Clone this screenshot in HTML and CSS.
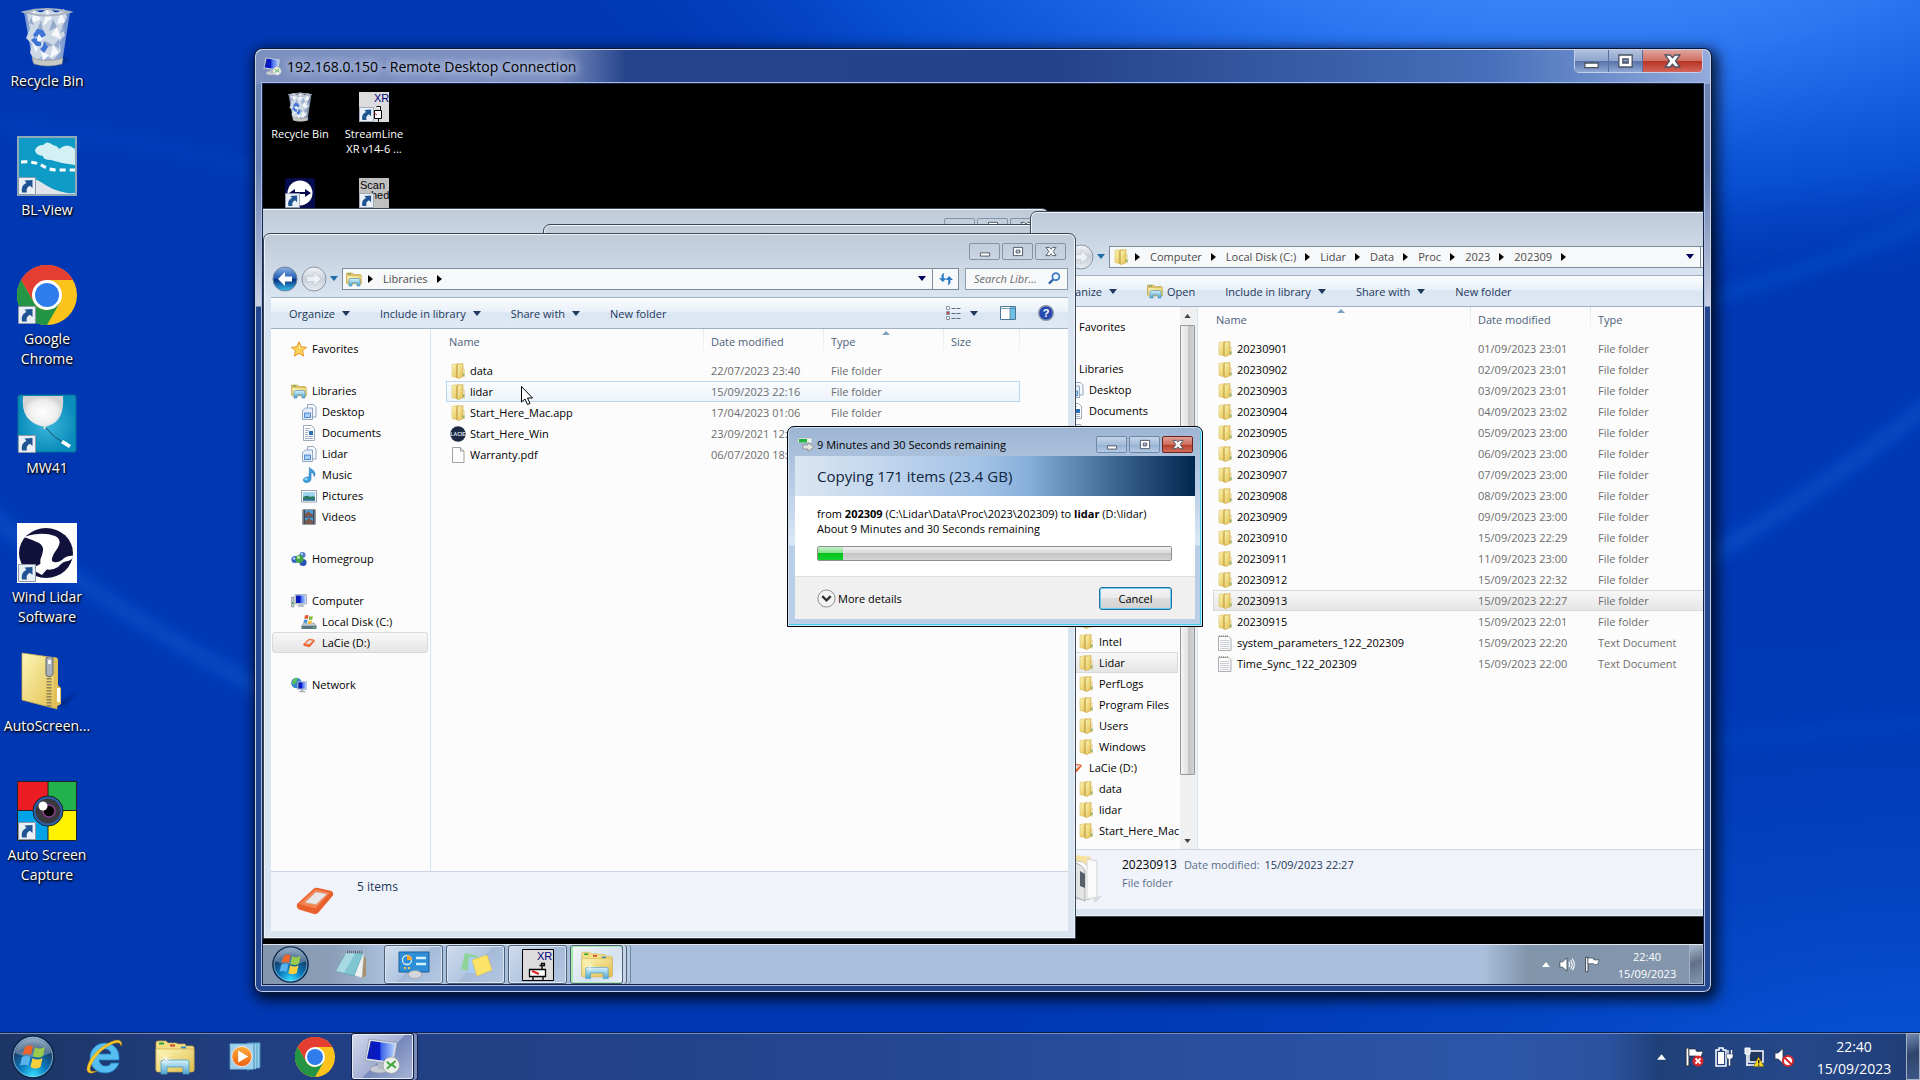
FILE: index.html
```html
<!DOCTYPE html>
<html lang="en">
<head>
    <meta charset="UTF-8">
    <meta name="viewport" content="width=device-width, initial-scale=1.0">
    <title>Desktop</title>
    <link rel="stylesheet" href="styles.css">
</head>
<body>
    <!-- Shared icon shapes -->
    <svg class="sprite" aria-hidden="true">
        <defs>
            <linearGradient id="gFolder" x1="0" x2="1" y1="0" y2="1"><stop offset="0" stop-color="#fdf6b8"/><stop offset="1" stop-color="#e0bd4c"/></linearGradient>
            <linearGradient id="gBlue" x1="0" x2="0" y1="0" y2="1"><stop offset="0" stop-color="#d6f1fb"/><stop offset="1" stop-color="#4fa5d0"/></linearGradient>
            <linearGradient id="gScreen" x1="0" x2="1"><stop offset="0" stop-color="#0a1bb0"/><stop offset=".45" stop-color="#0618c8"/><stop offset=".5" stop-color="#3b62ea"/><stop offset="1" stop-color="#b9d4ff"/></linearGradient>
            <linearGradient id="gNav" x1="0" x2="0" y1="0" y2="1"><stop offset="0" stop-color="#8fb6e6"/><stop offset=".48" stop-color="#1f58b0"/><stop offset=".52" stop-color="#0a2f80"/><stop offset="1" stop-color="#35c1f0"/></linearGradient>
            <linearGradient id="gNavOff" x1="0" x2="0" y1="0" y2="1"><stop offset="0" stop-color="#f3f5f8"/><stop offset=".5" stop-color="#c9d0da"/><stop offset="1" stop-color="#e9eef4"/></linearGradient>
            <radialGradient id="gOrb" cx=".5" cy=".95" r=".95"><stop offset="0" stop-color="#35e0ff"/><stop offset=".35" stop-color="#0b7cc0"/><stop offset=".7" stop-color="#15406c"/><stop offset="1" stop-color="#8ba6c2"/></radialGradient>
            <radialGradient id="gBall"><stop offset="0" stop-color="#fff"/><stop offset=".7" stop-color="#eee"/><stop offset="1" stop-color="#d2d2d2"/></radialGradient>
            <radialGradient id="gTeal"><stop offset="0" stop-color="#3fb7dc"/><stop offset="1" stop-color="#0a8dbb"/></radialGradient>
            <linearGradient id="gBin" x1="0" x2="1"><stop offset="0" stop-color="#9db4d8"/><stop offset=".3" stop-color="#e3ebf5"/><stop offset=".7" stop-color="#c9d6e8"/><stop offset="1" stop-color="#8ea7d0"/></linearGradient>
            <linearGradient id="gOrange" x1="0" x2="0" y1="0" y2="1"><stop offset="0" stop-color="#ffae3c"/><stop offset="1" stop-color="#ea5f10"/></linearGradient>
            <filter id="fBlur" x="-50%" y="-50%" width="200%" height="200%"><feGaussianBlur stdDeviation="1.500"/></filter>
        </defs>

        <symbol id="folder" viewBox="0 0 16 16">
            <path d="M2 1.500l7-1v14.500l-7-1.500z" fill="url(#gFolder)" stroke="#d8bf62" stroke-width=".6"/>
            <path d="M7 1.500l6-1v13l-5 2.200-1-1z" fill="url(#gFolder)" stroke="#c9a540" stroke-width=".6"/>
            <path d="M7 2v13" stroke="#b8953a" stroke-width=".8"/>
            <path d="M13 6h1.300v8H13z" fill="#fff8d8" stroke="#c9a540" stroke-width=".4"/>
            <path d="M13.300 10.500h1v2.500h-1z" fill="#4f9f62"/>
        </symbol>
        <symbol id="library" viewBox="0 0 16 16">
            <path d="M.5 2h6l1 1.500h7V12H.5z" fill="#e7c869" stroke="#b89c4c" stroke-width=".6"/>
            <path d="M1 4.500h14.500V13H1z" fill="url(#gFolder)" stroke="#c4a74c" stroke-width=".5"/>
            <path d="M2 3h3" stroke="#4c9f4c"/>
            <path d="M3 15V9q0-1.500 1.500-1.500h8Q14 7.500 14 9v6h-3v-3H6v3z" fill="url(#gBlue)" stroke="#3c8ab8" stroke-width=".6"/>
        </symbol>
        <symbol id="libfolder" viewBox="0 0 16 16">
            <path d="M6.500.5h6l2.500 2.500v10H6.500z" fill="#f4f8fc" stroke="#7b93b0" stroke-width=".8"/>
            <path d="M1.500 6.500l3-2.500h7v11.500h-10z" fill="#e6eff9" stroke="#7b93b0" stroke-width=".8"/>
            <path d="M3.500 9h6v4.500h-6z" fill="#a5d0f7" stroke="#3b6fc0" stroke-width=".8"/>
        </symbol>
        <symbol id="document" viewBox="0 0 16 16">
            <path d="M2.500.5h8l3 3v12h-11z" fill="#fff" stroke="#8795a8" stroke-width=".8"/>
            <path d="M4 3.500h5M4 5.500h4M4 7.500h3M4 9.500h3M4 11.500h8M4 13.500h8" stroke="#8aa0bb" stroke-width=".8"/>
            <path d="M8 6h4v4H8z" fill="#2a6eb4"/>
        </symbol>
        <symbol id="music" viewBox="0 0 16 16">
            <path d="M8.500.5c1 2 5 2.500 5.500 6 .2 2-1 3-1 3 .3-2.500-1-3.500-3-4V12c0 2-2 3.500-4.500 3.500S2 14 2.500 12.300 5.500 9.800 8 10z" fill="#3ea2e0" stroke="#1e6fb4" stroke-width=".6"/>
            <ellipse cx="5" cy="12" rx="1.500" ry="1" fill="#a9defa"/>
        </symbol>
        <symbol id="picture" viewBox="0 0 16 16">
            <path d="M.5 2.500h15v11.500H.5z" fill="#fff" stroke="#7d8a9a" stroke-width=".8"/>
            <path d="M2 4h12v8.500H2z" fill="#9ed4f0"/>
            <path d="M2 9q5-2.500 7 0 3-1.500 5 0v3.500H2z" fill="#2e7b62"/>
            <path d="M2 11h12v1.500H2z" fill="#2c6ea8"/>
        </symbol>
        <symbol id="video" viewBox="0 0 16 16">
            <path d="M1.500.5h13v15h-13z" fill="#2b3642"/>
            <path d="M4 1h8v6.500H4zM4 8.500h8V15H4z" fill="#4d9fdc"/>
            <path d="M4 5l3-3 5 4v1.500H4zM4 12l4-3 4 3v3H4z" fill="#7c5a50"/>
            <path d="M2.700 1.500v13M13.300 1.500v13" stroke="#dfe6ee" stroke-width="1" stroke-dasharray="1 1"/>
        </symbol>
        <symbol id="homegroup" viewBox="0 0 16 16">
            <circle cx="4" cy="8.500" r="3.600" fill="#3764c8"/><circle cx="11.500" cy="4" r="3" fill="#4f7ad0"/>
            <circle cx="12" cy="11.500" r="3.600" fill="#2a50b8"/><circle cx="8.500" cy="8" r="4" fill="#43a548"/>
            <circle cx="3" cy="7.500" r="1.200" fill="#bcd2ff"/><circle cx="7.500" cy="6.500" r="1.400" fill="#c2efb4"/><circle cx="11" cy="3" r="1" fill="#c8dcff"/>
        </symbol>
        <symbol id="computer" viewBox="0 0 16 16">
            <path d="M.5 4h2.500v10H.5z" fill="#c5cad0" stroke="#777f88" stroke-width=".6"/><path d="M1 9h1.500v2H1z" fill="#3cb44a"/>
            <path d="M4 1.500h11.500V11H4z" fill="#d5dae2" stroke="#8890a0" stroke-width=".6"/>
            <path d="M5 2.500h9.500V10H5z" fill="url(#gScreen)"/>
            <path d="M8 11h4l1.500 3h-7z" fill="#b9bfc8"/>
        </symbol>
        <symbol id="disk" viewBox="0 0 16 16">
            <path d="M3 9h10l2.500 3H.5z" fill="#bcc7cf" stroke="#7b8890" stroke-width=".5"/><path d="M.5 12h15v3H.5z" fill="#5b7482"/><path d="M12 13h2v1h-2z" fill="#4fe05c"/>
            <path d="M4 1.500q2-1 3.500 0l-.7 3.500q-2-1-3.500 0z" fill="#e8532a"/><path d="M8.300 2q2 1 3.700 0l-.8 3.500q-2 1-3.500 0z" fill="#84b93a"/>
            <path d="M3 6q2-1 3.500 0l-.7 3q-2-1-3.500 0z" fill="#3a8ed8"/><path d="M7.400 6.500q2 1 3.700 0l-.8 3q-2 1-3.500 0z" fill="#f5bd2f"/>
        </symbol>
        <symbol id="lacie" viewBox="0 0 38 28">
            <path d="M1 17L18 1.500q1-1 3-.7l14.500 3.200q2 1 1.500 4.500L22 26q-2 1.500-4 1L3 22.500Q0 20.500 1 17z" fill="#e8602c"/>
            <path d="M3 17L18.500 3q1-.8 2.500-.5L34 5.500 20.500 20.500q-1 1-2.500.7z" fill="#f58352"/>
            <path d="M9 15.500L20 5l11 2-11 10.500z" fill="#e8e6e6" stroke="#d0b4a8" stroke-width=".6"/>
        </symbol>
        <symbol id="network" viewBox="0 0 16 16">
            <circle cx="5.500" cy="6" r="5.300" fill="#2f86cc"/><path d="M2 3q3-3 5-1.500L5 5 3 8 1 6zM6 7l3-1-1 4z" fill="#5dc253"/>
            <path d="M6.500 4.500h9.500v8H6.500z" fill="#ccd3dd" stroke="#8c96a4" stroke-width=".4"/><path d="M7.300 5.300h8v6.300h-8z" fill="url(#gScreen)"/>
            <path d="M10 12.500h2.500V14h2v1.300H8V14h2z" fill="#aab2bd"/>
        </symbol>
        <symbol id="star" viewBox="0 0 16 16">
            <path d="M8 .8l2.200 4.900 5.300.6-4 3.500 1.200 5.300L8 12.400l-4.700 2.700 1.200-5.300-4-3.500 5.300-.6z" fill="#fdd257" stroke="#e08a1e" stroke-width=".9"/>
            <path d="M8 3l1.300 3.600L8 8z" fill="#fff3b8"/>
        </symbol>
        <symbol id="file" viewBox="0 0 16 16">
            <path d="M2.500.5h8l3.500 3.500v11.500H2.500z" fill="#fcfcfc" stroke="#8b8b8b" stroke-width=".8"/><path d="M10.500.5V4H14" fill="#e4e4e4" stroke="#8b8b8b" stroke-width=".8"/>
        </symbol>
        <symbol id="textfile" viewBox="0 0 16 16">
            <path d="M1.500 1.500h10l2.500 2v12H1.500z" fill="#fcfcfc" stroke="#9a9a9a" stroke-width=".8"/>
            <path d="M3 5.500h9.500M3 7.500h9.500M3 9.500h9.500M3 11.500h9.500M3 13.500h9.500" stroke="#b4bcc8" stroke-width=".7"/>
            <path d="M2.500 0v2M4.500 0v2M6.500 0v2M8.500 0v2M10.500 0v2" stroke="#8b8b8b" stroke-width=".8"/>
        </symbol>

        <symbol id="shortcut" viewBox="0 0 18 18">
            <path d="M.5.5h17v17H.5z" fill="#e9eff6" stroke="#8f9aa8"/>
            <path d="M4 15.500C3 10 5.500 7 8.500 6L6.500 3.500 14.500 3v8L12 8.800C9.500 10 8 12 9 15.500z" fill="#1f5391"/>
        </symbol>
        <symbol id="bin" viewBox="0 0 60 60">
            <ellipse cx="40" cy="53" rx="12" ry="4" fill="#001a66" opacity=".4" filter="url(#fBlur)"/>
            <path d="M7 5h46L45 56q-15 4-29 0z" fill="url(#gBin)" opacity=".75"/>
            <path d="M10 7l6-5 8 4 7-5 8 5 8-4 3 8-5 10 3 8-6 7 2 9-8 9-9-6-8 7-6-8 2-9-6-6 4-9z" fill="#cdd8e5"/>
            <path d="M16 3l8 9-9 4zM30 2l5 9-9 8zM44 5l-4 12 8-2zM20 22l8 8-7 6zM40 20l-6 8 10 4zM36 38l6 8-9 5zM24 44l8 4-6 6zM15 34l6 7-2 5z" fill="#f6f9fc"/>
            <path d="M24 13l-4 10 6 2zM36 12l-4 12 8-4zM28 34l8 4-9 4zM42 32l-5 6 5 4zM14 10l3 8-5-2zM46 18l-3 8 5-2z" fill="#95abc9"/>
            <path d="M16 28l4-6 6 1 3 5-4 3-3-4-3 5zM14 33l5 6 5 0 0-4-4-1 0-5zM27 34l4 6-4 6-4-4 3-3z" fill="#3f74d6"/>
            <path d="M7 5q23-6 46 0-23 7-46 0z" fill="none" stroke="#aab4c0" stroke-width="2"/>
            <path d="M15 51q15 5 31 0l-1 6q-14 4-28 0z" fill="#c9c9c4" stroke="#8c8c88" stroke-width=".6"/>
        </symbol>
        <symbol id="chrome" viewBox="0 0 60 60">
            <circle cx="30" cy="30" r="30" fill="#fcc31c"/>
            <path d="M4 15A30 30 0 0 1 56 15H30z" fill="#e33e31"/><path d="M4 15L17 37.500 30 15z" fill="#e33e31"/>
            <path d="M4 15L17 37.500A15 15 0 0 0 30 45l13-7.500L30 60A30 30 0 0 1 4 15z" fill="#249544"/>
            <circle cx="30" cy="30" r="15" fill="#fff"/><circle cx="30" cy="30" r="12" fill="#2f7ded"/>
        </symbol>
        <symbol id="orb" viewBox="0 0 44 44">
            <circle cx="22" cy="22" r="21" fill="url(#gOrb)" stroke="#0d2848" stroke-width="1.500"/>
            <circle cx="22" cy="22" r="19.500" fill="none" stroke="#a9c8e2" stroke-width="1" opacity=".7"/>
            <path d="M4 18A18.500 18.500 0 0 1 40 18Q22 26 4 18z" fill="#fff" opacity=".28"/>
            <path d="M14 12q4-3 8-1l-2 9q-4-2-8.500 0z" fill="#f0642c"/><path d="M24 12q4 3 10 0l-2 9q-5 3-10 0z" fill="#9acb4c"/>
            <path d="M11 22q4-2 8.500 0l-2 9q-4-2.500-8.500 0z" fill="#5ab3ec"/><path d="M21.500 23q5 3 10 0l-2 9q-5 3-10 0z" fill="#fbcf3b"/>
        </symbol>
        <symbol id="ie" viewBox="0 0 40 40">
            <path d="M20 6c8 0 14 6 14 14v3H14c1 4 3 6 7 6 3 0 4-1 5-3h8c-2 6-7 10-14 10C12 36 5 30 5 21S12 6 20 6zm0 6c-4 0-6 2-6.500 5h12.500c-.5-3-2.500-5-6-5z" fill="#56bdf0" stroke="#1f7dc4" stroke-width=".8"/>
            <path d="M36 9c2-5-2-8-10-4C14 10 3 22 2 32c0 5 5 5 10 2-4 1-7 1-7-2C6 24 17 11 27 7c5-2 9-2 9 2z" fill="#f9c928" stroke="#d49a10" stroke-width=".5"/>
        </symbol>
        <symbol id="explorer" viewBox="0 0 40 36">
            <path d="M1 4q0-2 2-2h8l2 2h8l2 1h7l1 2h6q2 0 2 2v22H1z" fill="#f3dd85" stroke="#c9a94a" stroke-width=".7"/>
            <path d="M4 4.500h5" stroke-width="2" stroke="#2fa13c"/><path d="M15 6.500h5" stroke-width="2" stroke="#d0432c"/><path d="M26 8.500h5" stroke-width="2" stroke="#2f88c8"/>
            <path d="M1 10h38v21q0 2-2 2H3q-2 0-2-2z" fill="url(#gFolder)" stroke="#cda94a" stroke-width=".7"/>
            <path d="M6 35V23q0-2 2-2h24q2 0 2 2v12h-6v-7H12v7z" fill="url(#gBlue)" stroke="#4c9cc4" stroke-width=".8"/>
            <path d="M11 14v12M5 20h12M7 16l8 8M15 16l-8 8" stroke="#fff" stroke-width=".8" opacity=".8"/>
        </symbol>
        <symbol id="wmp" viewBox="0 0 36 32">
            <path d="M20 1h14v27l-14 3z" fill="#6fb4d8" stroke="#3a84b0" stroke-width=".6"/><path d="M29 2v28M32 2v27" stroke="#b8e0f2" stroke-width=".8"/>
            <path d="M1 2h26v28H1z" fill="#9fd0ec" stroke="#4a94c0" stroke-width=".6"/>
            <circle cx="14" cy="16" r="11" fill="url(#gOrange)" stroke="#fff" stroke-width=".8"/><path d="M10 9.500l11 6.500-11 6.500z" fill="#fff"/>
        </symbol>
        <symbol id="rdp" viewBox="0 0 38 36">
            <ellipse cx="16" cy="31" rx="10" ry="4" fill="#c8ccd4" stroke="#8a909c" stroke-width=".6"/><path d="M14 24h6v7h-6z" fill="#b4bac6"/>
            <path d="M5 0l29 4-4 22L1 22z" fill="#d9dee8" stroke="#8e98ac" stroke-width=".8"/><path d="M7 2l25 3.500-4 18L3 20z" fill="url(#gScreen)"/>
            <circle cx="28" cy="27" r="8.500" fill="#eceeec" stroke="#9aa09a" stroke-width=".8"/>
            <path d="M23.500 23.500l4 3.500-4 3.500M32.500 22.500l-4 3.500 4 3.500" fill="none" stroke="#3fa53a" stroke-width="2"/>
        </symbol>
        <symbol id="arrow-down" viewBox="0 0 8 5"><path d="M0 0h8L4 5z"/></symbol>
        <symbol id="crumb" viewBox="0 0 5 8"><path d="M0 0l5 4-5 4z"/></symbol>
        <symbol id="flag" viewBox="0 0 20 20">
            <path d="M2 1h3v18H2z" fill="#fff" stroke="#222c3c"/><path d="M5 2h7v2q3 1 7 0-1 5-3 6-3 1-4-1H5z" fill="#fff" stroke="#222c3c" stroke-width=".7"/>
        </symbol>
        <symbol id="speaker" viewBox="0 0 18 18">
            <path d="M1 6h3l5-4.500v15L4 12H1z" fill="#fff" stroke="#2a3444" stroke-width=".8"/>
        </symbol>
        <symbol id="min" viewBox="0 0 14 12"><path d="M2 7.500h10v3.500H2z" fill="#fff" stroke="#4a5464"/></symbol>
        <symbol id="max" viewBox="0 0 14 12"><path d="M2 1.500h10v9H2zM5 4.500h4v3H5z" fill="#fff" fill-rule="evenodd" stroke="#4a5464"/></symbol>
        <symbol id="close" viewBox="0 0 14 12"><path d="M1.500 1.500h3.700L7 3.500l1.800-2h3.700L9.300 6l3.200 4.500H8.800L7 8.500l-1.800 2H1.500L4.700 6z" fill="#fff" stroke="#4a5464"/></symbol>
    </svg>

    <main class="desktop">
        <svg class="wallpaper" viewBox="0 0 1920 1080" preserveAspectRatio="none" aria-hidden="true">
            <defs>
                <radialGradient id="wTop" cx="0" cy="0" r="1" gradientUnits="userSpaceOnUse" gradientTransform="translate(1580 -80) scale(1050 400)"><stop offset="0" stop-color="#4a96ff"/><stop offset=".35" stop-color="#2c76f2"/><stop offset=".7" stop-color="#0a55da" stop-opacity=".8"/><stop offset="1" stop-color="#0038b4" stop-opacity="0"/></radialGradient>
                <radialGradient id="wBottom" cx="1" cy="1.100" r=".55"><stop offset="0" stop-color="#0a5ce0"/><stop offset="1" stop-color="#0038b4" stop-opacity="0"/></radialGradient>
                <filter id="soft"><feGaussianBlur stdDeviation="8"/></filter>
            </defs>
            <path d="M0 0h1920v1080H0z" fill="#0038b4"/>
            <path d="M0 0h1920v1080H0z" fill="url(#wBottom)"/>
            <path d="M0 0h1920v1080H0z" fill="url(#wTop)"/>
            <g fill="none" stroke="#0b58d2" filter="url(#soft)" opacity=".6">
                <path d="M-20 530Q120 650 300 740" stroke-width="16"/>
                <path d="M1680 600Q1800 530 1940 415" stroke-width="16"/>
                <path d="M1680 320Q1800 290 1940 225" stroke-width="10"/>
                <path d="M-20 130Q140 140 280 185M1680 780Q1800 765 1940 755" stroke-width="5"/>
            </g>
        </svg>

        <ul class="icons">
            <li><svg><use href="#bin"/></svg><span>Recycle Bin</span></li>
            <li>
                <svg viewBox="0 0 60 60">
                    <path d="M1 1h58v58H1z" fill="#0e9bc6" stroke="#8fa9b8" stroke-width="2"/>
                    <path d="M18 14q2-5 8-5 4-5 10 0 5 1 6 4 8-7 16 0v16q-12-1-24-5-8 0-8-4-8-1-8-6z" fill="#d3f0f5"/>
                    <path d="M4 26q14-1 22 4 6 4 14 4h18" fill="none" stroke="#fff" stroke-width="3" stroke-dasharray="6 4"/>
                    <path d="M2 43q12-3 20 2t14 8q12 5 22 4v1H2z" fill="#dfe5ea"/>
                    <use href="#shortcut" x="1" y="41" width="18" height="18"/>
                </svg>
                <span>BL-View</span>
            </li>
            <li><svg viewBox="0 0 60 60"><use href="#chrome"/><use href="#shortcut" x="1" y="41" width="18" height="18"/></svg><span>Google Chrome</span></li>
            <li>
                <svg viewBox="0 0 60 60">
                    <rect x="1" y="1" width="58" height="57" rx="2" fill="url(#gTeal)" stroke="#0a6f94"/>
                    <path d="M6 2h40q2 25-15 30l-3 1 2 2h-4l1-2Q3 28 6 2z" fill="url(#gBall)"/>
                    <path d="M29 34q8 10 18 15" fill="none" stroke="#17506a"/><path d="M46 46l8 5-2 3-8-5z" fill="#fff"/>
                    <use href="#shortcut" x="1" y="41" width="18" height="18"/>
                </svg>
                <span>MW41</span>
            </li>
            <li>
                <svg viewBox="0 0 60 60">
                    <path d="M0 0h60v60H0z" fill="#fff"/>
                    <ellipse cx="29" cy="30" rx="27" ry="25" fill="#11113b"/>
                    <path d="M7 14q18-6 31-1 8 4 2 13-6 8-5 12 4 3 10-1 5-5 12-4-2 4-6 5-5 0-10 6-8 5-15 1-5-5-1-13 3-9-3-12-6-3-15-6z" fill="#fff"/>
                    <path d="M12 45q11-1 15-9l4 9-6 7z" fill="#fff"/>
                    <use href="#shortcut" x="1" y="41" width="18" height="18"/>
                </svg>
                <span>Wind Lidar Software</span>
            </li>
            <li>
                <svg viewBox="0 0 60 60">
                    <path d="M36 54l24-14-12 14z" fill="#001a60" opacity=".5" filter="url(#fBlur)"/>
                    <path d="M5 1l35 5v51L5 48z" fill="url(#gFolder)" stroke="#cda84a" stroke-width=".7"/>
                    <path d="M37 5l4 2v26l3 3v16l-7 4z" fill="#dfbf58"/><path d="M40 36h3v14h-3z" fill="#fff"/>
                    <path d="M32 8v48" stroke="#8d8358" stroke-width="5" stroke-dasharray="1.500 1.500"/>
                    <path d="M29 6q4-3 7 0v16q-3 5-7 1z" fill="#a9b0b8" stroke="#5c6570"/><path d="M31 8h3v4h-3z" fill="#f3f6f8"/>
                </svg>
                <span>AutoScreen...</span>
            </li>
            <li>
                <svg viewBox="0 0 60 60">
                    <path d="M0 0h31v30H0z" fill="#ed1c24"/><path d="M31 0h29v30H31z" fill="#22b14c"/><path d="M0 30h31v30H0z" fill="#00a2e8"/><path d="M31 30h29v30H31z" fill="#fff200"/>
                    <path d="M31 0v60M0 29.500h60M.5.5h59v59H.5z" fill="none" stroke="#222"/>
                    <circle cx="31" cy="30" r="15" fill="#3a3a3e" stroke="#111"/><circle cx="31" cy="30" r="13.500" fill="none" stroke="#2c62ac" stroke-width="2"/>
                    <circle cx="32" cy="30" r="6" fill="#000" stroke="#8b3f8e" stroke-width="1.500"/><circle cx="26" cy="25" r="4.500" fill="#fff"/>
                    <use href="#shortcut" x="1" y="41" width="18" height="18"/>
                </svg>
                <span>Auto Screen Capture</span>
            </li>
        </ul>

        <!-- Remote session -->
        <section class="rdp">
            <header class="rdp-title">
                <svg class="rdp-icon"><use href="#rdp"/></svg>
                <h1>192.168.0.150 - Remote Desktop Connection</h1>
                <div class="rdp-buttons">
                    <button aria-label="Minimize"><svg><use href="#min"/></svg></button>
                    <button aria-label="Maximize"><svg><use href="#max"/></svg></button>
                    <button class="rdp-close" aria-label="Close"><svg><use href="#close"/></svg></button>
                </div>
            </header>

            <div class="remote">
                <div class="remote-desktop">
                    <ul class="remote-icons">
                        <li><svg><use href="#bin"/></svg><span>Recycle Bin</span></li>
                        <li>
                            <svg viewBox="0 0 30 30">
                                <path d="M0 0h30v30H0z" fill="#dcdcdc"/><text x="15" y="10" font-size="11" font-family="Liberation Sans, sans-serif" fill="#00007c">XR</text>
                                <path d="M15.500 18.500h7v8h-7zM17.500 14.500h4v4M19.500 26.500v3.500" fill="#fff" stroke="#000"/><path d="M14 20l4 3" stroke="#c22"/>
                                <use href="#shortcut" x="0" y="15" width="15" height="15"/>
                            </svg>
                            <span>StreamLine<br>XR v14-6 ...</span>
                        </li>
                        <li>
                            <svg viewBox="0 0 30 30">
                                <rect width="30" height="32" rx="3" fill="#050b4c"/><circle cx="15" cy="15" r="12.500" fill="#fff"/>
                                <path d="M4 15l6-4v3h10v-3l6 4-6 4v-3H10v3z" fill="#050b4c"/><use href="#shortcut" x="0" y="15" width="15" height="15"/>
                            </svg>
                        </li>
                        <li>
                            <svg viewBox="0 0 30 30">
                                <path d="M0 0h30v30H0z" fill="#c0c0c0"/>
                                <g font-size="11" font-family="Liberation Sans, sans-serif"><text x="1" y="11">Scan</text><text x="12" y="21">hed</text></g>
                                <use href="#shortcut" x="0" y="15" width="15" height="15"/>
                            </svg>
                        </li>
                    </ul>

                    <div class="window window-back">
                        <div class="window-buttons">
                            <button aria-label="Minimize"><svg><use href="#min"/></svg></button>
                            <button aria-label="Maximize"><svg><use href="#max"/></svg></button>
                            <button aria-label="Close"><svg><use href="#close"/></svg></button>
                        </div>
                    </div>
                    <div class="window window-middle"></div>

                    <!-- C:\Lidar\Data\Proc\2023\202309 -->
                    <section class="window explorer explorer-source">
                        <div class="window-buttons">
                            <button aria-label="Minimize"><svg><use href="#min"/></svg></button>
                            <button aria-label="Maximize"><svg><use href="#max"/></svg></button>
                            <button aria-label="Close"><svg><use href="#close"/></svg></button>
                        </div>
                        <div class="navbar">
                            <svg class="nav-arrows" viewBox="0 0 56 26" aria-hidden="true">
                                <circle cx="13" cy="13" r="12" fill="url(#gNav)" stroke="#69809c"/><path d="M13 6L6 13l7 7v-4.500h7v-5h-7z" fill="#fff"/>
                                <circle cx="42" cy="13" r="12" fill="url(#gNavOff)" stroke="#8a94a3"/><path d="M42 6l7 7-7 7v-4.500h-7v-5h7z" fill="#eef1f5" stroke="#ccd2da"/>
                            </svg>
                            <svg class="tri tri-blue"><use href="#arrow-down"/></svg>
                            <nav class="address">
                                <svg class="ico"><use href="#folder"/></svg><svg class="crumb"><use href="#crumb"/></svg>
                                <a href="#">Computer</a><svg class="crumb"><use href="#crumb"/></svg>
                                <a href="#">Local Disk (C:)</a><svg class="crumb"><use href="#crumb"/></svg>
                                <a href="#">Lidar</a><svg class="crumb"><use href="#crumb"/></svg>
                                <a href="#">Data</a><svg class="crumb"><use href="#crumb"/></svg>
                                <a href="#">Proc</a><svg class="crumb"><use href="#crumb"/></svg>
                                <a href="#">2023</a><svg class="crumb"><use href="#crumb"/></svg>
                                <a href="#">202309</a><svg class="crumb"><use href="#crumb"/></svg>
                                <svg class="tri tri-end"><use href="#arrow-down"/></svg>
                                <button class="refresh" aria-label="Refresh"></button>
                            </nav>
                            <div class="search"></div>
                        </div>
                        <div class="toolbar">
                            <button>Organize<svg class="tri"><use href="#arrow-down"/></svg></button>
                            <button class="open"><svg class="ico"><use href="#library"/></svg>Open</button>
                            <button>Include in library<svg class="tri"><use href="#arrow-down"/></svg></button>
                            <button>Share with<svg class="tri"><use href="#arrow-down"/></svg></button>
                            <button>New folder</button>
                        </div>
                        <div class="panes">
                            <ul class="tree tree-scroll">
                                <li><svg class="ico"><use href="#star"/></svg>Favorites</li>
                                <li class="gap"></li>
                                <li><svg class="ico"><use href="#library"/></svg>Libraries</li>
                                <li class="l2"><svg class="ico"><use href="#libfolder"/></svg>Desktop</li>
                                <li class="l2"><svg class="ico"><use href="#document"/></svg>Documents</li>
                                <li class="l2"><svg class="ico"><use href="#libfolder"/></svg></li>
                                <li class="l2"><svg class="ico"><use href="#music"/></svg></li>
                                <li class="l2"><svg class="ico"><use href="#picture"/></svg></li>
                                <li class="l2"><svg class="ico"><use href="#video"/></svg></li>
                                <li class="gap"></li>
                                <li><svg class="ico"><use href="#homegroup"/></svg></li>
                                <li class="gap"></li>
                                <li><svg class="ico"><use href="#computer"/></svg></li>
                                <li class="l2"><svg class="ico"><use href="#disk"/></svg></li>
                                <li class="l3"><svg class="ico"><use href="#folder"/></svg></li>
                                <li class="l3"><svg class="ico"><use href="#folder"/></svg>Intel</li>
                                <li class="l3 selected"><svg class="ico"><use href="#folder"/></svg>Lidar</li>
                                <li class="l3"><svg class="ico"><use href="#folder"/></svg>PerfLogs</li>
                                <li class="l3"><svg class="ico"><use href="#folder"/></svg>Program Files</li>
                                <li class="l3"><svg class="ico"><use href="#folder"/></svg>Users</li>
                                <li class="l3"><svg class="ico"><use href="#folder"/></svg>Windows</li>
                                <li class="l2"><svg class="ico ico-small"><use href="#lacie"/></svg>LaCie (D:)</li>
                                <li class="l3"><svg class="ico"><use href="#folder"/></svg>data</li>
                                <li class="l3"><svg class="ico"><use href="#folder"/></svg>lidar</li>
                                <li class="l3"><svg class="ico"><use href="#folder"/></svg>Start_Here_Mac</li>
                            </ul>
                            <div class="scrollbar">
                                <svg class="scroll-up"><use href="#arrow-down"/></svg>
                                <div class="thumb"></div>
                                <svg class="scroll-down"><use href="#arrow-down"/></svg>
                            </div>
                            <div class="files">
                                <table>
                                    <thead>
                                        <tr><th class="col-name sorted">Name</th><th class="col-date">Date modified</th><th>Type</th></tr>
                                    </thead>
                                    <tbody>
                                        <tr><td><svg class="ico"><use href="#folder"/></svg>20230901</td><td>01/09/2023 23:01</td><td>File folder</td></tr>
                                        <tr><td><svg class="ico"><use href="#folder"/></svg>20230902</td><td>02/09/2023 23:01</td><td>File folder</td></tr>
                                        <tr><td><svg class="ico"><use href="#folder"/></svg>20230903</td><td>03/09/2023 23:01</td><td>File folder</td></tr>
                                        <tr><td><svg class="ico"><use href="#folder"/></svg>20230904</td><td>04/09/2023 23:02</td><td>File folder</td></tr>
                                        <tr><td><svg class="ico"><use href="#folder"/></svg>20230905</td><td>05/09/2023 23:00</td><td>File folder</td></tr>
                                        <tr><td><svg class="ico"><use href="#folder"/></svg>20230906</td><td>06/09/2023 23:00</td><td>File folder</td></tr>
                                        <tr><td><svg class="ico"><use href="#folder"/></svg>20230907</td><td>07/09/2023 23:00</td><td>File folder</td></tr>
                                        <tr><td><svg class="ico"><use href="#folder"/></svg>20230908</td><td>08/09/2023 23:00</td><td>File folder</td></tr>
                                        <tr><td><svg class="ico"><use href="#folder"/></svg>20230909</td><td>09/09/2023 23:00</td><td>File folder</td></tr>
                                        <tr><td><svg class="ico"><use href="#folder"/></svg>20230910</td><td>15/09/2023 22:29</td><td>File folder</td></tr>
                                        <tr><td><svg class="ico"><use href="#folder"/></svg>20230911</td><td>11/09/2023 23:00</td><td>File folder</td></tr>
                                        <tr><td><svg class="ico"><use href="#folder"/></svg>20230912</td><td>15/09/2023 22:32</td><td>File folder</td></tr>
                                        <tr class="selected"><td><svg class="ico"><use href="#folder"/></svg>20230913</td><td>15/09/2023 22:27</td><td>File folder</td></tr>
                                        <tr><td><svg class="ico"><use href="#folder"/></svg>20230915</td><td>15/09/2023 22:01</td><td>File folder</td></tr>
                                        <tr><td><svg class="ico"><use href="#textfile"/></svg>system_parameters_122_202309</td><td>15/09/2023 22:20</td><td>Text Document</td></tr>
                                        <tr><td><svg class="ico"><use href="#textfile"/></svg>Time_Sync_122_202309</td><td>15/09/2023 22:00</td><td>Text Document</td></tr>
                                    </tbody>
                                </table>
                            </div>
                        </div>
                        <footer class="details">
                            <svg class="details-icon" viewBox="0 0 64 56" aria-hidden="true">
                                <path d="M10 2l32 4v8L10 10z" fill="#f6e29a"/><path d="M44 48l10-4-8 8z" fill="#d8dade"/>
                                <path d="M14 8l20 3 6 6v32L14 46z" fill="#fff" stroke="#c8c8c8"/>
                                <path d="M26 12q8 2 10 8v30l-10-4z" fill="#e2e4e6" stroke="#aaa"/><path d="M31 20l5 3v14l-5-2z" fill="#56606a"/><path d="M38 8l10 2v36l-10 2z" fill="#fafafa" stroke="#d4d4d4"/>
                            </svg>
                            <div>
                                <p><b>20230913</b><span class="dim">Date modified:</span> 15/09/2023 22:27</p>
                                <p class="dim">File folder</p>
                            </div>
                        </footer>
                    </section>

                    <!-- Libraries -->
                    <section class="window explorer explorer-target">
                        <div class="window-buttons">
                            <button aria-label="Minimize"><svg><use href="#min"/></svg></button>
                            <button aria-label="Maximize"><svg><use href="#max"/></svg></button>
                            <button aria-label="Close"><svg><use href="#close"/></svg></button>
                        </div>
                        <div class="navbar">
                            <svg class="nav-arrows" viewBox="0 0 56 26" aria-hidden="true">
                                <circle cx="13" cy="13" r="12" fill="url(#gNav)" stroke="#69809c"/><path d="M13 6L6 13l7 7v-4.500h7v-5h-7z" fill="#fff"/>
                                <circle cx="42" cy="13" r="12" fill="url(#gNavOff)" stroke="#8a94a3"/><path d="M42 6l7 7-7 7v-4.500h-7v-5h7z" fill="#eef1f5" stroke="#ccd2da"/>
                            </svg>
                            <svg class="tri tri-blue"><use href="#arrow-down"/></svg>
                            <nav class="address">
                                <svg class="ico"><use href="#library"/></svg><svg class="crumb"><use href="#crumb"/></svg>
                                <a href="#">Libraries</a><svg class="crumb"><use href="#crumb"/></svg>
                                <svg class="tri tri-end"><use href="#arrow-down"/></svg>
                                <button class="refresh" aria-label="Refresh">
                                    <svg viewBox="0 0 16 16"><path d="M6 1Q2 2 3 7H0l4.500 4.500L8.500 7H5.500Q5 4 6 1zM10 15q4-1 3-6h3l-4.500-4.500L7.500 9h3q.5 3-.5 6z" fill="#2a7bc4"/></svg>
                                </button>
                            </nav>
                            <div class="search">
                                <input type="search" placeholder="Search Libr..." aria-label="Search Libraries">
                                <svg viewBox="0 0 14 14"><circle cx="8.500" cy="5" r="3.800" fill="#e8f4fc" stroke="#3a78c0" stroke-width="1.800"/><path d="M5.500 8L1 12.500" stroke="#2d5fa8" stroke-width="2.400"/></svg>
                            </div>
                        </div>
                        <div class="toolbar">
                            <button>Organize<svg class="tri"><use href="#arrow-down"/></svg></button>
                            <button>Include in library<svg class="tri"><use href="#arrow-down"/></svg></button>
                            <button>Share with<svg class="tri"><use href="#arrow-down"/></svg></button>
                            <button>New folder</button>
                            <div class="toolbar-end">
                                <button aria-label="Change view">
                                    <svg class="ico" viewBox="0 0 16 16"><path d="M1.500 1.500h3v3h-3zM1.500 6.500h3v3h-3zM1.500 11.500h3v3h-3z" fill="#fff" stroke="#8a97a8"/><path d="M6.500 3.500h4m1 0h4M6.500 8.500h4m1 0h4M6.500 13.500h4m1 0h4" stroke="#5b6b80"/><path d="M2 7h2v2H2z" fill="#c44"/></svg><svg class="tri"><use href="#arrow-down"/></svg>
                                </button>
                                <button aria-label="Preview pane"><svg class="ico" viewBox="0 0 16 16"><path d="M.5 1.500h15v13H.5z" fill="#fff" stroke="#4c7896"/><path d="M10 2h5v12h-5z" fill="#6fc0e4"/><path d="M1 3.500h14M10 3v11" stroke="#4c7896" stroke-width=".7"/></svg></button>
                                <button aria-label="Help"><svg class="ico" viewBox="0 0 16 16"><circle cx="8" cy="8" r="7.300" fill="#2748b0" stroke="#8994a8" stroke-width="1.400"/><text x="8" y="12" font-size="11" font-weight="bold" font-family="Liberation Sans, sans-serif" text-anchor="middle" fill="#fff">?</text></svg></button>
                            </div>
                        </div>
                        <div class="panes">
                            <ul class="tree">
                                <li><svg class="ico"><use href="#star"/></svg>Favorites</li>
                                <li class="gap"></li>
                                <li><svg class="ico"><use href="#library"/></svg>Libraries</li>
                                <li class="l2"><svg class="ico"><use href="#libfolder"/></svg>Desktop</li>
                                <li class="l2"><svg class="ico"><use href="#document"/></svg>Documents</li>
                                <li class="l2"><svg class="ico"><use href="#libfolder"/></svg>Lidar</li>
                                <li class="l2"><svg class="ico"><use href="#music"/></svg>Music</li>
                                <li class="l2"><svg class="ico"><use href="#picture"/></svg>Pictures</li>
                                <li class="l2"><svg class="ico"><use href="#video"/></svg>Videos</li>
                                <li class="gap"></li>
                                <li><svg class="ico"><use href="#homegroup"/></svg>Homegroup</li>
                                <li class="gap"></li>
                                <li><svg class="ico"><use href="#computer"/></svg>Computer</li>
                                <li class="l2"><svg class="ico"><use href="#disk"/></svg>Local Disk (C:)</li>
                                <li class="l2 selected"><svg class="ico ico-small"><use href="#lacie"/></svg>LaCie (D:)</li>
                                <li class="gap"></li>
                                <li><svg class="ico"><use href="#network"/></svg>Network</li>
                            </ul>
                            <div class="files">
                                <table>
                                    <thead>
                                        <tr><th class="col-name">Name</th><th class="col-date">Date modified</th><th class="col-type sorted">Type</th><th>Size</th></tr>
                                    </thead>
                                    <tbody>
                                        <tr><td><svg class="ico"><use href="#folder"/></svg>data</td><td>22/07/2023 23:40</td><td>File folder</td><td></td></tr>
                                        <tr class="hover"><td><svg class="ico"><use href="#folder"/></svg>lidar</td><td>15/09/2023 22:16</td><td>File folder</td><td></td></tr>
                                        <tr><td><svg class="ico"><use href="#folder"/></svg>Start_Here_Mac.app</td><td>17/04/2023 01:06</td><td>File folder</td><td></td></tr>
                                        <tr><td><svg class="ico" viewBox="0 0 16 16"><circle cx="8" cy="8" r="7.700" fill="#1d2a44"/><text x="8" y="10" font-size="5" font-family="Liberation Sans, sans-serif" font-weight="bold" text-anchor="middle" fill="#dfe4ee">LACIE</text></svg>Start_Here_Win</td><td>23/09/2021 12:11</td><td></td><td></td></tr>
                                        <tr><td><svg class="ico"><use href="#file"/></svg>Warranty.pdf</td><td>06/07/2020 18:11</td><td></td><td></td></tr>
                                    </tbody>
                                </table>
                            </div>
                        </div>
                        <footer class="details">
                            <svg class="details-icon" viewBox="0 0 64 56" aria-hidden="true"><use href="#lacie" x="14" y="14" width="38" height="28"/></svg>
                            <div><p class="count">5 items</p></div>
                        </footer>
                    </section>

                    <!-- Copy progress -->
                    <section class="window dialog">
                        <header class="dialog-title">
                            <svg class="ico" viewBox="0 0 16 16"><path d="M0 1h14v5H0z" fill="#e8f4e8" stroke="#9ab" stroke-width=".6"/><path d="M1 2h8v3.500H1z" fill="#22b040"/><path d="M5 8h5V5.500l6 4.500-6 4.500V12H5z" fill="#e4e4e4" stroke="#888" stroke-width=".8"/></svg>
                            <h2>9 Minutes and 30 Seconds remaining</h2>
                            <div class="window-buttons">
                                <button aria-label="Minimize"><svg><use href="#min"/></svg></button>
                                <button aria-label="Maximize"><svg><use href="#max"/></svg></button>
                                <button class="close" aria-label="Close"><svg><use href="#close"/></svg></button>
                            </div>
                        </header>
                        <div class="dialog-banner">Copying 171 items (23.4 GB)</div>
                        <div class="dialog-body">
                            <p>from <b>202309</b> (C:\Lidar\Data\Proc\2023\202309) to <b>lidar</b> (D:\lidar)</p>
                            <p>About 9 Minutes and 30 Seconds remaining</p>
                            <progress value="7" max="100" aria-label="Copy progress"></progress>
                        </div>
                        <footer class="dialog-footer">
                            <button class="more"><svg viewBox="0 0 20 20"><circle cx="10" cy="10" r="9" fill="#f4f4f4" stroke="#868686"/><path d="M5.500 7.500L10 12l4.500-4.500" fill="none" stroke="#333" stroke-width="2.500"/></svg>More details</button>
                            <button class="cancel">Cancel</button>
                        </footer>
                    </section>

                    <svg class="cursor" viewBox="0 0 12 19" aria-hidden="true"><path d="M.5.5v15.500l3.500-3 2.500 5.500 2.500-1-2.500-5.500h5z" fill="#fff" stroke="#000"/></svg>
                </div>

                <footer class="remote-taskbar">
                    <button class="start" aria-label="Start"><svg><use href="#orb"/></svg></button>
                    <button class="pin" aria-label="Notepad">
                        <svg viewBox="0 0 32 30"><path d="M26 5l5 3v18l-4 2z" fill="#a8906a"/><path d="M24 3h5l-2 25-9-3z" fill="#eef1f4" stroke="#a8aeb8" stroke-width=".5"/><path d="M11 3h17L19 26 1 21z" fill="#7fc6d2" stroke="#5898a8" stroke-width=".6"/><path d="M11 3h9L9 23l-8-2z" fill="#c4e8ee" opacity=".6"/><path d="M12 2h16" stroke="#667" stroke-width="2.500" stroke-dasharray="1 1"/></svg>
                    </button>
                    <button class="task" aria-label="Control Panel">
                        <svg viewBox="0 0 32 28"><path d="M1 1h30v20H1z" fill="#2f8ed8" stroke="#1c5f9c"/><circle cx="9" cy="9" r="4.500" fill="none" stroke="#d8ecfa" stroke-width="1.300"/><path d="M9 9V4a5 5 0 0 1 5 5z" fill="#f7a52c"/><path d="M18 7h10M18 13h10" stroke="#d0f2fc" stroke-width="2.500"/><path d="M6 17h2m2 0h2" stroke="#f7c23c" stroke-width="2"/><ellipse cx="17" cy="23.500" rx="7" ry="4" fill="#d3d6da" stroke="#8b9098" stroke-width=".6"/></svg>
                    </button>
                    <button class="task" aria-label="Sticky Notes">
                        <svg viewBox="0 0 32 28"><path d="M5 2l13 3-4 16-13-3z" fill="#8fd39a"/><path d="M9 6l12 1-1 15H8z" fill="#a9cdf4"/><path d="M12 9l15-5 5 15-15 6z" fill="#fbe468" stroke="#e0c244" stroke-width=".6"/></svg>
                    </button>
                    <button class="task" aria-label="StreamLine XR">
                        <svg viewBox="0 0 32 32"><path d="M.5.5h31v31H.5z" fill="#dcdcdc" stroke="#000"/><text x="15" y="11" font-size="11" font-family="Liberation Sans, sans-serif" fill="#00007c">XR</text><path d="M7.500 20.500h16v7h-16zM11 27v4M21 27v4M17.500 16.500h5v-2h-3v2M20 17v3" fill="#fff" stroke="#000" stroke-width="1.300"/><path d="M10 22l7 3" stroke="#d22" stroke-width="2"/></svg>
                    </button>
                    <button class="task stacked" aria-label="Windows Explorer"><svg><use href="#explorer"/></svg></button>
                    <div class="tray">
                        <svg class="tray-up" viewBox="0 0 8 5"><path d="M4 0l4 5H0z" fill="#fff"/></svg>
                        <svg viewBox="0 0 18 18"><use href="#speaker"/><path d="M11 6q2 3 0 6M13 4q3.500 5 0 10M15 2.500q4.500 6.500 0 13" fill="none" stroke="#fff" stroke-width="1.200"/></svg>
                        <svg><use href="#flag"/></svg>
                    </div>
                    <time class="clock">22:40<br>15/09/2023</time>
                    <button class="peek" aria-label="Show desktop"></button>
                </footer>
            </div>
        </section>
    </main>

    <footer class="taskbar">
        <button class="start" aria-label="Start"><svg class="orb"><use href="#orb"/></svg></button>
        <button aria-label="Internet Explorer"><svg><use href="#ie"/></svg></button>
        <button aria-label="Windows Explorer"><svg><use href="#explorer"/></svg></button>
        <button aria-label="Media Player"><svg class="wmp"><use href="#wmp"/></svg></button>
        <button aria-label="Google Chrome"><svg><use href="#chrome"/></svg></button>
        <button class="active" aria-label="Remote Desktop Connection"><svg class="task-rdp"><use href="#rdp"/></svg></button>
        <div class="tray">
            <svg class="tray-up" viewBox="0 0 8 5"><path d="M4 0l4 5H0z" fill="#fff"/></svg>
            <svg viewBox="0 0 20 20"><use href="#flag"/><circle cx="14" cy="14" r="5.500" fill="#d9272e"/><path d="M11.500 11.500l5 5m0-5l-5 5" stroke="#fff" stroke-width="1.800"/></svg>
            <svg viewBox="0 0 20 20"><path d="M2 3h3V1h4v2h3v16H2z" fill="none" stroke="#fff" stroke-width="1.500"/><path d="M4 5h6v12H4z" fill="#fff"/><path d="M14 3v4m3.500-4v4" stroke="#fff" stroke-width="1.300"/><path d="M12.500 7h6.500v3q-1 2-2.500 2v7h-2v-7q-2 0-2-2z" fill="#fff" stroke="#1c2c4c" stroke-width=".5"/></svg>
            <svg viewBox="0 0 20 20"><path d="M5 4h14v11H5z" fill="#20365c" stroke="#fff" stroke-width="1.500"/><path d="M1 1h5v6H1z" fill="#dfe6f0" stroke="#fff"/><path d="M3 7v12M3 18h9" stroke="#fff" stroke-width="1.600"/><path d="M14.500 10l5.500 9.500H9.500z" fill="#fbd92c" stroke="#7c6a10" stroke-width=".6"/><path d="M14.700 13v3.500m0 1v1.200" stroke="#222" stroke-width="1.400"/></svg>
            <svg viewBox="0 0 20 20"><use href="#speaker" width="18" height="18"/><circle cx="14" cy="14" r="5" fill="#fff" stroke="#d9272e" stroke-width="2"/><path d="M10.500 10.500l7 7" stroke="#d9272e" stroke-width="2"/></svg>
        </div>
        <time class="clock">22:40<br>15/09/2023</time>
        <button class="peek" aria-label="Show desktop"></button>
    </footer>
</body>
</html>
```
FILE: styles.css
```css
:root {
    --ui-font: "Open Sans", "Noto Sans", sans-serif;
    --frame: #d9e4f1;
    --line: #a0afc3;
    --bar-text: #1e395b;
    --head-text: #4c607a;
}

* {
    margin: 0;
    padding: 0;
    box-sizing: border-box;
}

body {
    display: flex;
    flex-direction: column;
    height: 100vh;
    overflow: hidden;
    font-family: var(--ui-font);
    font-size: 11px;
    background: #0038b4;
}

ul {
    list-style: none;
}

button {
    font: inherit;
    color: inherit;
    background: none;
    border: 0;
}

a {
    color: inherit;
    text-decoration: none;
}

svg {
    display: block;
    flex: none;
}

.sprite {
    position: absolute;
    width: 0;
    height: 0;
}

.desktop {
    position: relative;
    flex: 1;
    min-height: 0;
}

.wallpaper {
    position: absolute;
    inset: 0;
    width: 100%;
    height: 100%;
}

/* Desktop icons */
.icons {
    position: relative;
    width: 94px;
    padding-top: 7px;
}

.icons li {
    display: flex;
    flex-direction: column;
    align-items: center;
    gap: 4px;
    height: 129px;
    font-size: 14px;
    line-height: 20px;
    text-align: center;
    color: #fff;
    text-shadow: 1px 1px 2px #000, 0 1px 3px #000;
}

.icons svg {
    width: 60px;
    height: 60px;
}

/* Remote desktop window */
.rdp {
    position: absolute;
    top: 48px;
    left: 254px;
    right: 208px;
    bottom: 39px;
    display: flex;
    flex-direction: column;
    padding: 0 8px 8px;
    border: 1px solid #0b1838;
    border-radius: 8px;
    background: linear-gradient(rgba(255, 255, 255, 0.35), rgba(255, 255, 255, 0.3) 120px, rgba(255, 255, 255, 0.75) 257px, transparent 258px), #24468f;
    box-shadow: inset 0 0 0 1px #c4d2ee, 3px 4px 14px 3px rgba(0, 0, 0, 0.75);
}

.rdp-title {
    display: flex;
    align-items: center;
    gap: 5px;
    height: 35px;
    margin: 0 -7px;
    padding: 0 7px;
    border-radius: 7px 7px 0 0;
    background: linear-gradient(90deg, #7c90c0, #7c8fc0 300px, #26448c 370px, #24428a 55%, #4670bb 85%, #93abdb);
    box-shadow: inset 0 1px 0 #c4d2ee;
}

.rdp-icon {
    width: 19px;
    height: 19px;
}

.rdp-title h1 {
    flex: 1;
    font-size: 14px;
    font-weight: normal;
    line-height: 34px;
    color: #000;
    text-shadow: 0 0 6px #b8c2e0, 0 0 8px #b8c2e0, 0 0 10px #b8c2e0, 0 0 12px #b8c2e0;
}

.rdp-buttons {
    display: flex;
    align-self: flex-start;
    height: 24px;
    border: 1px solid #c4d0ea;
    border-radius: 0 0 5px 5px;
    overflow: hidden;
}

.rdp-buttons button {
    display: grid;
    place-items: center;
    width: 34px;
    border-right: 1px solid #5b6f9c;
    background: linear-gradient(#b3c2de, #90a5cc 48%, #5672a8 50%, #8fa7d4);
}

.rdp-buttons .rdp-close {
    width: 59px;
    border: 0;
    background: linear-gradient(#e0a49e, #d07064 48%, #b83220 50%, #d2655a);
}

.rdp-buttons svg {
    width: 19px;
    height: 16px;
}

.remote {
    flex: 1;
    min-height: 0;
    display: flex;
    flex-direction: column;
    overflow: hidden;
    background: #000;
    box-shadow: 0 0 0 1px #14264d, 0 0 0 2px #a9bbe0;
}

.remote-desktop {
    position: relative;
    flex: 1;
    min-height: 0;
    overflow: hidden;
}

.remote-icons {
    display: grid;
    grid-template-columns: 74px 74px;
    grid-auto-rows: 86px;
    padding-top: 8px;
}

.remote-icons li {
    display: flex;
    flex-direction: column;
    align-items: center;
    gap: 4px;
    line-height: 15px;
    text-align: center;
    white-space: nowrap;
    color: #fff;
}

.remote-icons svg {
    width: 30px;
    height: 30px;
}

/* Windows inside the session */
.window {
    position: absolute;
    border: 1px solid #3b4654;
    border-radius: 7px 7px 0 0;
    background: linear-gradient(#bfcad8, var(--frame) 62px);
    box-shadow: inset 0 0 0 1px #eef3f9;
}

.window-buttons {
    display: flex;
    gap: 2px;
    justify-content: flex-end;
}

.window-buttons button {
    display: grid;
    place-items: center;
    width: 31px;
    height: 17px;
    border: 1px solid #8493a8;
    border-radius: 2px;
}

.window-buttons svg {
    width: 14px;
    height: 11px;
}

.window-back {
    top: 124px;
    left: -40px;
    width: 826px;
    height: 300px;
}

.window-back .window-buttons {
    padding: 9px 7px 0 0;
}

.window-middle {
    top: 140px;
    left: 280px;
    width: 560px;
    height: 300px;
}

.explorer {
    display: flex;
    flex-direction: column;
    padding: 0 7px 7px;
}

.explorer > .window-buttons {
    padding: 9px 2px 7px 0;
}

.explorer-source {
    top: 127px;
    left: 767px;
    right: -141px;
    bottom: 27px;
}

.explorer-target {
    top: 149px;
    left: 0;
    width: 813px;
    bottom: 5px;
}

.ico {
    width: 16px;
    height: 16px;
}

.ico-small {
    padding: 2px;
}

.tri {
    width: 8px;
    height: 5px;
    fill: var(--bar-text);
}

.crumb {
    width: 5px;
    height: 8px;
    margin: 0 10px 0 9px;
}

.ico + .crumb {
    margin-left: 6px;
}

.navbar {
    display: flex;
    align-items: center;
    height: 23px;
    margin-bottom: 7px;
}

.nav-arrows {
    width: 56px;
    height: 26px;
    margin-left: 1px;
}

.tri-blue {
    margin: 0 4px 0 2px;
    fill: #1c6ca8;
}

.address {
    flex: 1;
    display: flex;
    align-items: center;
    height: 22px;
    padding-left: 3px;
    border: 1px solid #7d8a9a;
    background: #f7f8f9;
    color: #4c4c4c;
    white-space: nowrap;
}

.tri-end {
    margin: 0 6px 0 auto;
    fill: #00005c;
}

.refresh {
    display: grid;
    place-items: center;
    align-self: stretch;
    width: 26px;
    border-left: 1px solid #7d8a9a;
}

.refresh svg {
    width: 14px;
    height: 14px;
}

.search {
    display: flex;
    align-items: center;
    width: 103px;
    height: 22px;
    margin-left: 6px;
    padding: 0 6px 0 8px;
    border: 1px solid #8e9bab;
    background: #f7f8f9;
}

.search input {
    flex: 1;
    min-width: 0;
    border: 0;
    outline: 0;
    background: none;
    font: italic 11px var(--ui-font);
}

.search input::placeholder {
    color: #6d6d6d;
}

.search svg {
    width: 13px;
    height: 13px;
}

.toolbar {
    display: flex;
    align-items: center;
    gap: 30px;
    height: 32px;
    padding: 0 14px 0 18px;
    border-top: 1px solid var(--line);
    border-bottom: 1px solid var(--line);
    background: linear-gradient(#fbfdfe, #e9f0f9 45%, #dbe6f3 50%, #dfe9f5);
    color: var(--bar-text);
}

.toolbar button {
    display: flex;
    align-items: center;
    gap: 7px;
    white-space: nowrap;
}

.toolbar .open {
    gap: 4px;
}

.toolbar-end {
    display: flex;
    gap: 22px;
    margin-left: auto;
}

.toolbar-end .tri {
    margin-left: 2px;
}

.panes {
    flex: 1;
    min-height: 0;
    display: flex;
    background: #fcfcfc;
}

.tree {
    flex: none;
    width: 160px;
    padding: 9px 2px 0 1px;
    border-right: 1px solid #d6e3f1;
    overflow: hidden;
}

.tree li {
    display: flex;
    align-items: center;
    gap: 5px;
    height: 21px;
    padding-left: 18px;
    border: 1px solid transparent;
    border-radius: 3px;
    white-space: nowrap;
}

.tree .l2 {
    padding-left: 28px;
}

.tree .l3 {
    padding-left: 38px;
}

.tree .selected {
    border-color: #d9d9d9;
    background: linear-gradient(#f8f8f8, #e5e5e5);
}

.tree-scroll {
    width: 142px;
    border: 0;
}

.tree-scroll .selected {
    border-radius: 0;
}

.scrollbar {
    display: flex;
    flex-direction: column;
    align-items: center;
    width: 18px;
    padding: 7px 2px 6px 0;
    border-right: 1px solid #d6e3f1;
    background: #f0f0f0;
}

.scroll-up,
.scroll-down {
    width: 7px;
    height: 4px;
    fill: #444;
}

.scroll-up {
    transform: rotate(180deg);
    margin-bottom: 7px;
}

.scroll-down {
    margin-top: auto;
}

.thumb {
    width: 15px;
    height: 85%;
    border: 1px solid #979797;
    border-radius: 1px;
    background: linear-gradient(90deg, #f5f5f5, #e2e2e2 50%, #c3c3c3 60%, #d4d4d4);
}

.files {
    flex: 1;
    min-width: 0;
    padding-left: 15px;
}

.files table {
    width: 100%;
    table-layout: fixed;
    border-collapse: collapse;
}

.explorer-target .files table {
    width: 574px;
}

.files th {
    position: relative;
    height: 31px;
    padding-left: 7px;
    font-weight: normal;
    line-height: 26px;
    text-align: left;
    vertical-align: top;
    color: var(--head-text);
    background: linear-gradient(#dfe8f2, #f2f6fa) right 0 top 0 / 1px 23px no-repeat;
}

.files .col-name {
    width: 258px;
    padding-left: 3px;
}

.files .col-date,
.files .col-type {
    width: 120px;
}

.files .sorted::after {
    content: "";
    position: absolute;
    top: 2px;
    left: 48%;
    border: 4px solid transparent;
    border-top: 0;
    border-bottom-color: #7ba0c0;
}

.files td {
    height: 21px;
    padding-left: 7px;
    white-space: nowrap;
    color: #6d6d6d;
}

.files td:first-child {
    display: flex;
    align-items: center;
    gap: 4px;
    padding-left: 4px;
    color: #000;
}

.files .hover,
.files .selected {
    outline: 1px solid #b8d6ee;
    outline-offset: -1px;
    background: linear-gradient(#fafcfe, #ecf3fb);
}

.files .selected {
    outline-color: #d9d9d9;
    background: linear-gradient(#f8f8f8, #e5e5e5);
}

.details {
    display: flex;
    height: 60px;
    border-top: 1px solid #cbd6e2;
    background: #f0f3f9;
    color: var(--bar-text);
}

.details-icon {
    width: 64px;
    height: 56px;
    margin: 1px 9px 0 11px;
}

.details div {
    padding-top: 6px;
    line-height: 18px;
}

.details b {
    margin-right: 7px;
    font-weight: normal;
    font-size: 12px;
    color: #000;
}

.details .count {
    padding-left: 2px;
    font-size: 12px;
}

.details .dim {
    margin-right: 2px;
    color: #5a6f8c;
}

/* Copy dialog */
.dialog {
    top: 342px;
    left: 524px;
    width: 416px;
    padding: 0 7px 7px;
    border-color: #000;
    background: linear-gradient(#9db5d3, #b9cde6 60px, #dce8f6 118px, #b9cfe8 119px);
    box-shadow: inset 0 0 0 1px #cfe4f6, inset -1px -1px 0 1px #3fd0f0;
}

.dialog-title {
    display: flex;
    align-items: center;
    gap: 3px;
    height: 29px;
    padding: 6px 2px 0 3px;
}

.dialog-title h2 {
    flex: 1;
    font-size: 11px;
    font-weight: normal;
}

.dialog .window-buttons button {
    border-color: #6f87a8;
    background: linear-gradient(#c4d5ea, #a6bdd9 50%, #93aecf 50%, #b4cbe6);
}

.dialog .window-buttons .close {
    border-color: #6b2420;
    background: linear-gradient(#e0a095, #cd6c5c 50%, #b53a24 50%, #d2705c);
}

.dialog-banner {
    height: 40px;
    padding-left: 22px;
    background: linear-gradient(90deg, #dbe6f3, #a5c4e6 45%, #88b0dc 58%, #3d6592 80%, #00274f);
    font-size: 15px;
    line-height: 40px;
    color: #10243c;
}

.dialog-body {
    height: 80px;
    padding: 10px 23px 0 22px;
    background: #fff;
    line-height: 15px;
    white-space: nowrap;
}

.dialog-body progress {
    display: block;
    width: 100%;
    height: 15px;
    margin-top: 10px;
    border: 1px solid #8e8e8e;
    border-radius: 2px;
    overflow: hidden;
    appearance: none;
}

.dialog-body progress::-webkit-progress-bar {
    background: linear-gradient(#f2f2f2, #dadada 45%, #c6c6c6 50%, #d4d4d4);
}

.dialog-body progress::-webkit-progress-value {
    background: linear-gradient(#c4f2c8, #86e08c 45%, #06c31c 50%, #12d030);
}

.dialog-footer {
    display: flex;
    align-items: center;
    justify-content: space-between;
    height: 43px;
    padding: 0 23px 0 22px;
    border-top: 1px solid #dfdfdf;
    background: #f0f0f0;
}

.more {
    display: flex;
    align-items: center;
    gap: 2px;
}

.more svg {
    width: 19px;
    height: 19px;
}

.cancel {
    width: 73px;
    height: 23px;
    border: 1px solid #2f6c96;
    border-radius: 3px;
    box-shadow: inset 0 0 0 1px #5fd0f4;
    background: linear-gradient(#f3f3f3, #ebebeb 50%, #dcdcdc 50%, #d2d2d2);
}

.cursor {
    position: absolute;
    top: 302px;
    left: 258px;
    width: 12px;
    height: 19px;
}

/* Taskbars */
.remote-taskbar {
    display: flex;
    height: 40px;
    border-top: 1px solid #dfe6f0;
    background: linear-gradient(90deg, #8296ae, #8c9fb8 70px, #a9bfdb 120px, #a9bfdb calc(100% - 220px), #8195ab calc(100% - 175px), #8496ad);
    color: #fff;
}

.remote-taskbar .start {
    width: 54px;
    padding-left: 9px;
}

.remote-taskbar .start svg {
    width: 37px;
    height: 37px;
}

.remote-taskbar .pin,
.remote-taskbar .task {
    display: grid;
    place-items: center;
    width: 67px;
}

.remote-taskbar .task {
    width: 59px;
    margin-right: 3px;
    border: 1px solid #4c6078;
    border-radius: 3px;
    box-shadow: inset 0 0 0 1px #dbe6f4;
    background: linear-gradient(135deg, #cfdcec, #b2c6e0 50%, #a4bad8 50%, #b4c8e2);
}

.remote-taskbar .stacked {
    width: 53px;
    background: linear-gradient(135deg, #f2f6fa, #d5e2f0 60%, #e6eef8);
    box-shadow: inset 1px 0 0 1px #a5eaa8, 3px 0 0 #c4d3e6, 4px 0 0 #4c6078, 7px 0 0 #b8cae2, 8px 0 0 #71869f;
}

.remote-taskbar .pin svg,
.remote-taskbar .task svg {
    width: 32px;
    height: 32px;
}

.tray {
    display: flex;
    align-items: center;
    margin-left: auto;
    gap: 9px;
}

.tray svg {
    width: 16px;
    height: 17px;
}

.tray .tray-up {
    width: 8px;
    height: 5px;
}

.remote-taskbar .clock {
    width: 89px;
    padding: 3px 0 0 5px;
    line-height: 17px;
    text-align: center;
}

.peek {
    width: 14px;
    border: 1px solid #a4b2c4;
    background: linear-gradient(160deg, rgba(200, 215, 235, 0.5), rgba(60, 75, 100, 0.5) 45%, rgba(130, 150, 180, 0.3));
}

.taskbar {
    position: relative;
    display: flex;
    flex: none;
    height: 48px;
    border-top: 1px solid #10204a;
    background: linear-gradient(90deg, #1d3565, #213e80 240px, #23438c 700px, #2c56a8 1500px, #2b529e 1610px, #1f4077 1660px, #26488a 1800px, #203c74);
    box-shadow: inset 0 1px 0 #6f8cc8;
    color: #fff;
}

.taskbar > button:not(.peek) {
    display: grid;
    place-items: center;
    width: 70px;
}

.taskbar > .start:not(.peek) {
    width: 66px;
    margin-right: 4px;
}

.taskbar svg {
    width: 40px;
    height: 40px;
}

.taskbar .orb {
    width: 44px;
    height: 44px;
}

.taskbar .wmp {
    width: 33px;
    height: 33px;
}

.taskbar .task-rdp {
    width: 37px;
    height: 37px;
}

.taskbar > .active:not(.peek) {
    width: 63px;
    margin-left: 1px;
    border: 1px solid #101c40;
    border-radius: 3px;
    background: linear-gradient(135deg, #d3daec, #a4b0d4 50%, #7688bc 52%, #a9b6d8);
    box-shadow: inset 0 0 0 1px #e6ebf6, 3px 0 0 #7c8cb8, 4px 0 0 #14224c;
}

.taskbar .tray {
    gap: 10px;
}

.taskbar .tray svg {
    width: 20px;
    height: 20px;
}

.taskbar .tray .tray-up {
    width: 9px;
    height: 6px;
    margin-right: 8px;
}

.taskbar .clock {
    width: 112px;
    padding: 3px 0 0 8px;
    font-size: 14px;
    line-height: 22px;
    text-align: center;
}
```
